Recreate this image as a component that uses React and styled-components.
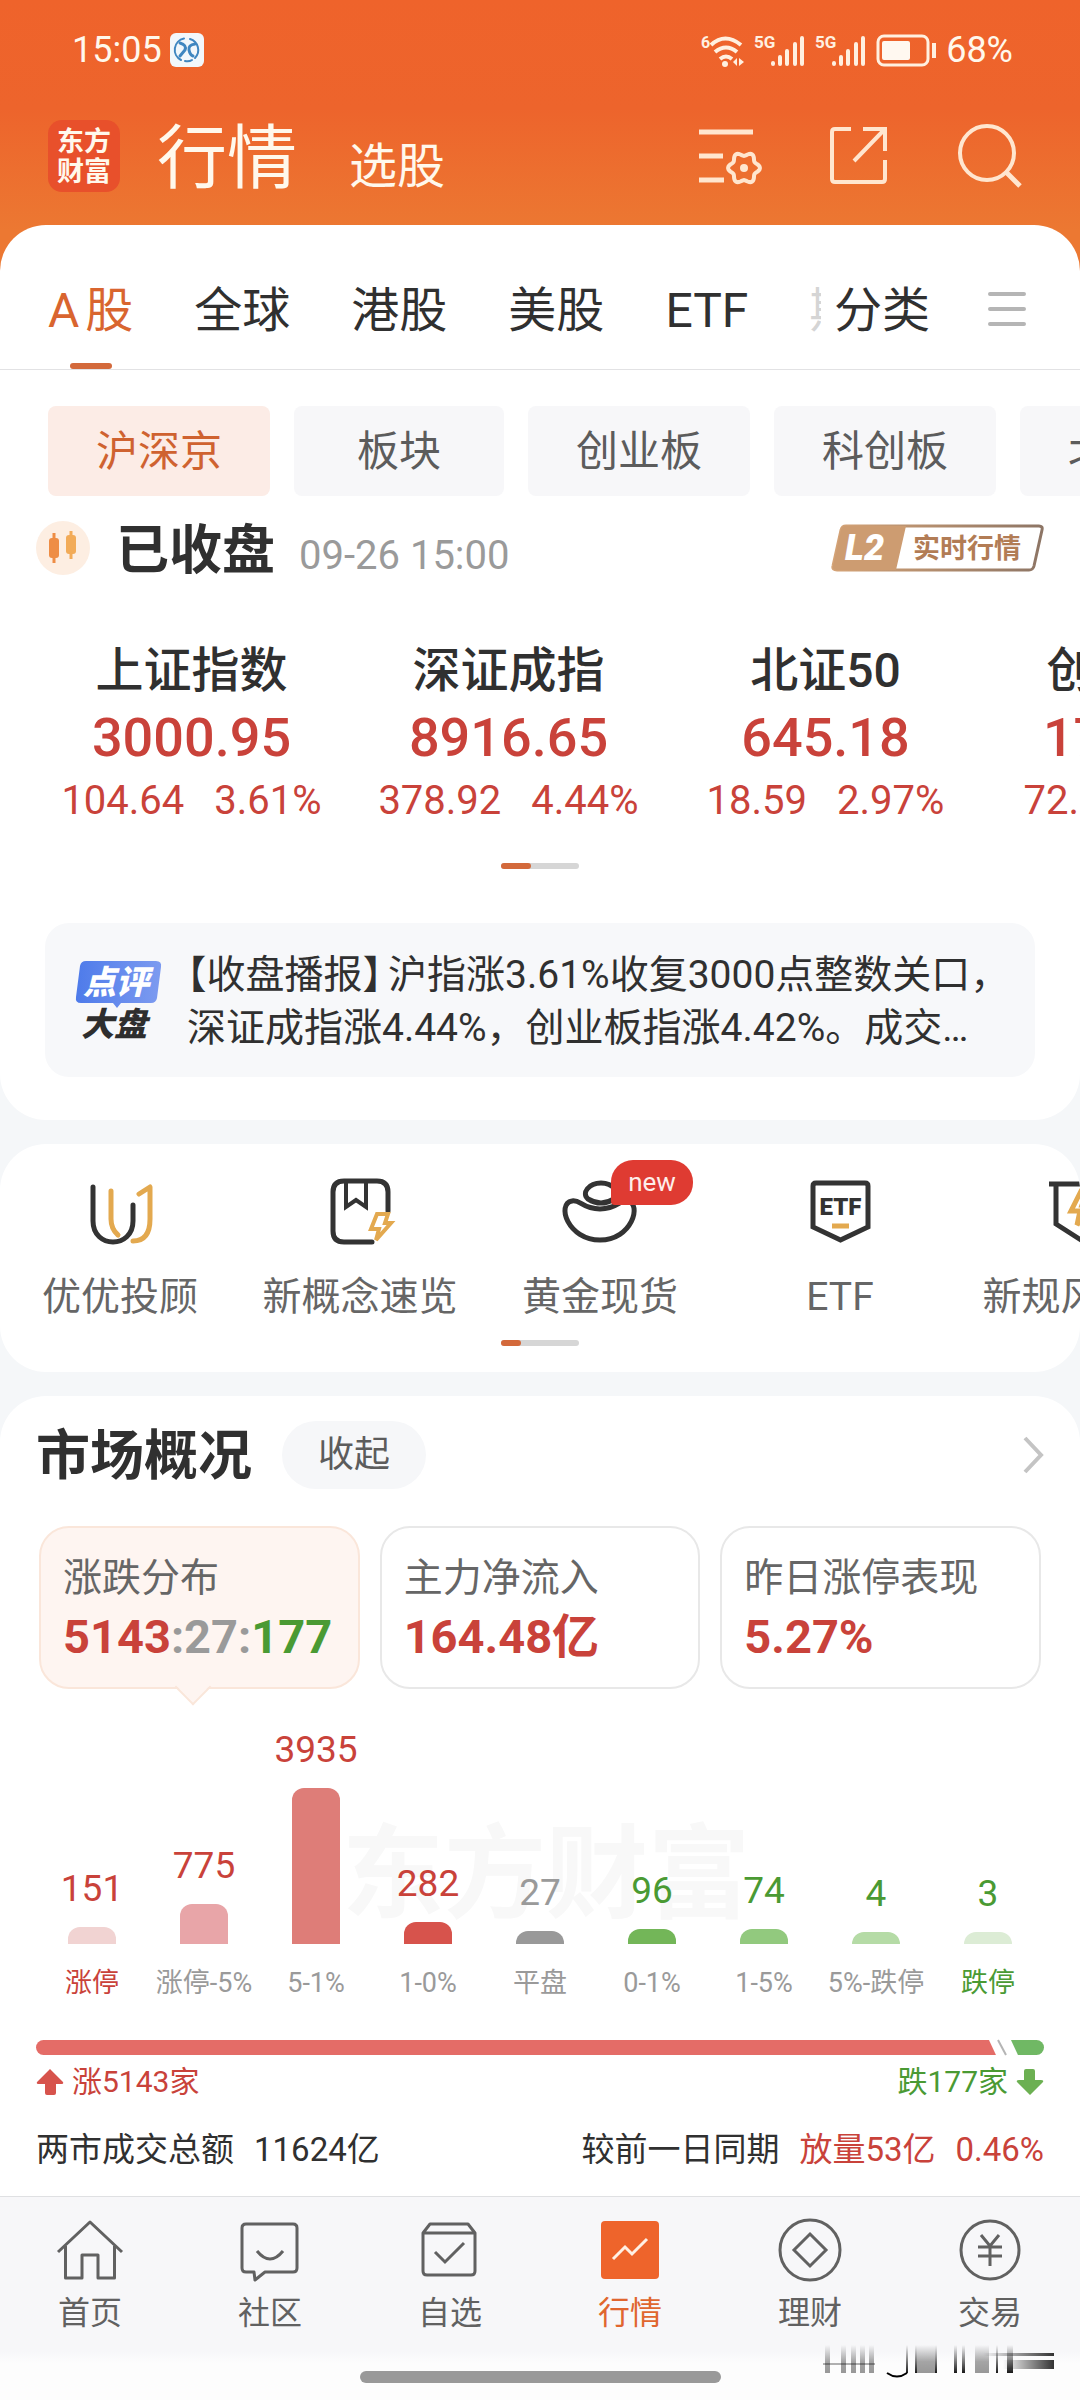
import React from "react";
import styled, { createGlobalStyle } from "styled-components";

const GlobalStyle = createGlobalStyle`
  * {
    box-sizing: border-box;
  }
  body {
    margin: 0;
    background: #f5f7f9;
    color: #303030;
    font-family: Roboto, "Noto Sans CJK SC", sans-serif;
  }
  button {
    border: 0;
    padding: 0;
    margin: 0;
    background: none;
    color: inherit;
    font: inherit;
    cursor: pointer;
  }
  h1, h2, p {
    margin: 0;
    padding: 0;
    font-weight: 400;
  }
  a {
    color: inherit;
    text-decoration: none;
  }
  svg {
    display: block;
    flex: none;
    overflow: visible;
  }
`;

const RED = "#c9423a";
const GREEN = "#4a9a33";
const GRAY = "#9a9a9a";
const ORANGE = "#ee642b";

const Page = styled.div`
  width: 100%;
  overflow: hidden;
`;

/* ---------- header ---------- */

const Header = styled.header`
  background: linear-gradient(#ef632b 0%, #ed642c 40%, #ec7832 85%);
  color: #fff8ec;
  padding-bottom: 59px;
`;

const StatusBar = styled.div`
  display: flex;
  align-items: center;
  height: 100px;
  padding: 0 67px 0 72px;
  font-size: 36px;
  line-height: 44px;
`;

const StatusApp = styled.svg`
  margin-left: 8px;
`;

const StatusRight = styled.div`
  display: flex;
  align-items: center;
  gap: 10px;
  margin-left: auto;
`;

const TitleBar = styled.div`
  display: flex;
  align-items: center;
  height: 112px;
  padding: 0 58px 0 48px;
`;

const Logo = styled.div`
  width: 72px;
  height: 72px;
  border-radius: 14px;
  background: #e8502b;
  font-family: "Noto Sans CJK SC", sans-serif;
  font-size: 27px;
  font-weight: 700;
  line-height: 30px;
  padding: 5px 0;
  text-align: center;
`;

const Titles = styled.div`
  display: flex;
  align-items: baseline;
  gap: 52px;
  padding-top: 6px;
  margin-left: 37px;
`;

const Title = styled.h1`
  font-size: 70px;
  line-height: 112px;
`;

const SubTitle = styled.a`
  font-size: 48px;
`;

const HeaderIcons = styled.div`
  display: flex;
  gap: 64px;
  margin-left: auto;
  color: #ffe6cf;
`;

/* ---------- panels ---------- */

const Panel = styled.section`
  position: relative;
  background: #fff;
  border-radius: 46px;
  margin-top: 24px;
  overflow: hidden;
`;

const QuotePanel = styled(Panel)`
  margin-top: -46px;
  padding-bottom: 43px;
`;

const MarketPanel = styled(Panel)`
  border-radius: 46px 46px 0 0;
  padding: 25px 36px 22px;
`;

const TabBar = styled.nav`
  display: flex;
  align-items: center;
  padding: 24px 54px 0 48px;
  border-bottom: 1px solid #e2e2e4;
  font-size: 48px;
`;

const TabScroller = styled.div`
  position: relative;
  display: flex;
  flex: 1;
  gap: 61px;
  overflow: hidden;

  &::after {
    content: "";
    position: absolute;
    right: 0;
    top: 0;
    width: 16px;
    height: 100%;
    background: rgba(255, 255, 255, 0.8);
  }
`;

const Tab = styled.button`
  position: relative;
  flex: none;
  height: 120px;
  line-height: 123px;
  white-space: nowrap;
  text-autospace: normal;
  color: ${(p) => (p.$active ? "#d9652f" : "#303030")};

  &::after {
    content: "";
    display: ${(p) => (p.$active ? "block" : "none")};
    position: absolute;
    left: 50%;
    bottom: 0;
    width: 42px;
    height: 6px;
    margin-left: -21px;
    border-radius: 3px;
    background: #d3693b;
  }
`;

const SortTab = styled(Tab)`
  margin: 0 58px 0 13px;
`;

const ChipRow = styled.div`
  display: flex;
  gap: 24px;
  padding: 36px 0 0 48px;
`;

const Chip = styled.button`
  flex: none;
  height: 90px;
  padding: 0 48px;
  min-width: 210px;
  border-radius: 8px;
  font-size: 42px;
  line-height: 92px;
  white-space: nowrap;
  background: ${(p) => (p.$active ? "#fcece6" : "#f7f7f9")};
  color: ${(p) => (p.$active ? "#cf6230" : "#5c5c5c")};
`;

const SessionRow = styled.div`
  display: flex;
  align-items: center;
  height: 104px;
  padding: 0 36px;
`;

const SessionText = styled.div`
  display: flex;
  align-items: baseline;
  gap: 24px;
  padding-top: 6px;
  margin-left: 26px;
`;

const SessionTitle = styled.h2`
  font-size: 53px;
  font-weight: 700;
  line-height: 72px;
`;

const SessionTime = styled.span`
  font-size: 40px;
  color: ${GRAY};
`;

const LevelButton = styled.button`
  margin-left: auto;
`;

const IndexRow = styled.div`
  display: flex;
  padding: 40px 0 0 33px;
`;

const IndexItem = styled.button`
  flex: 0 0 317px;
  display: flex;
  flex-direction: column;
  align-items: center;
  color: ${RED};
`;

const IndexName = styled.span`
  font-size: 48px;
  font-weight: 500;
  line-height: 62px;
  color: #303030;
`;

const IndexValue = styled.span`
  font-size: 54px;
  font-weight: 500;
  line-height: 72px;
`;

const IndexChange = styled.span`
  display: flex;
  gap: 30px;
  font-size: 40px;
  line-height: 54px;
`;

const Pager = styled.div`
  width: 78px;
  height: 6px;
  margin: ${(p) => p.$top}px auto 0;
  border-radius: 3px;
  background: #d6d6d6;

  &::before {
    content: "";
    display: block;
    width: ${(p) => p.$fill}px;
    height: 6px;
    border-radius: 3px;
    background: #d3693b;
  }
`;

const Review = styled.a`
  display: flex;
  align-items: center;
  gap: 26px;
  margin: 54px 45px 0;
  padding: 24px 20px 24px 31px;
  border-radius: 24px;
  background: #f7f8fa;
`;

const ReviewText = styled.p`
  flex: 1;
  min-width: 0;
  padding-top: 2px;
  margin-bottom: -2px;
  font-size: 39px;
  line-height: 53px;
  white-space: nowrap;
`;

const ReviewLine = styled.span`
  display: block;
`;

const ReviewRest = styled(ReviewLine)`
  overflow: hidden;
  text-overflow: ellipsis;
  margin-right: 30px;
`;

const Bracket = styled.span`
  font-family: "Noto Sans CJK SC", sans-serif;
  font-feature-settings: "halt";
  text-spacing-trim: space-all;
  line-height: 0;
  margin-right: ${(p) => (p.$closing ? 6 : 0)}px;
`;

const Shortcuts = styled.div`
  display: flex;
  padding-top: 35px;
`;

const Shortcut = styled.a`
  position: relative;
  flex: 0 0 240px;
  display: flex;
  flex-direction: column;
  align-items: center;
  gap: 24px;
  font-size: 39px;
  line-height: 56px;
  white-space: nowrap;
  color: #666;
`;

const NewBadge = styled.span`
  position: absolute;
  left: 131px;
  top: -19px;
  width: 82px;
  height: 45px;
  border-radius: 22px 22px 22px 4px;
  background: #df3b32;
  color: #fdeeea;
  font-size: 26px;
  line-height: 45px;
  text-align: center;
`;

const ShortcutPanel = styled(Panel)`
  padding-bottom: 26px;
`;

/* ---------- market overview ---------- */

const MarketHead = styled.div`
  display: flex;
  align-items: center;
  height: 68px;
`;

const MarketTitle = styled.h2`
  padding-top: 4px;
  font-size: 54px;
  font-weight: 700;
  line-height: 68px;
`;

const FoldButton = styled.button`
  width: 144px;
  height: 68px;
  margin-left: 30px;
  border-radius: 34px;
  background: #f6f7f9;
  color: #5c5c5c;
  font-size: 36px;
  line-height: 68px;
`;

const MoreLink = styled.a`
  margin-left: auto;
`;

const StatGrid = styled.div`
  display: grid;
  grid-template-columns: repeat(3, 1fr);
  gap: 20px;
  padding: 37px 3px 0;
`;

const Stat = styled.button`
  position: relative;
  padding: 24px 22px 17px;
  border: 2px solid ${(p) => (p.$active ? "#fae6da" : "#e8e8e8")};
  border-radius: 30px;
  background: ${(p) => (p.$active ? "#fef5f1" : "#fff")};
  text-align: left;
  white-space: nowrap;

  &::after {
    content: "";
    display: ${(p) => (p.$active ? "block" : "none")};
    position: absolute;
    left: 139px;
    bottom: -13px;
    width: 24px;
    height: 24px;
    border: solid #fae6da;
    border-width: 0 2px 2px 0;
    background: linear-gradient(135deg, transparent 50%, #fef5f1 50%);
    transform: rotate(45deg);
  }
`;

const StatLabel = styled.span`
  display: block;
  font-size: 39px;
  line-height: 52px;
  color: #666;
`;

const StatValue = styled.span`
  display: block;
  font-size: 47px;
  font-weight: 700;
  line-height: 66px;
  color: ${RED};
`;

const Tone = styled.span`
  color: ${(p) => p.$color};
`;

const Chart = styled.div`
  position: relative;
  display: grid;
  grid-template-columns: repeat(9, 1fr);
  align-items: end;
  margin-top: 39px;
`;

const Watermark = styled.span`
  position: absolute;
  left: 306px;
  bottom: 62px;
  font-size: 102px;
  font-weight: 700;
  line-height: 130px;
  color: #f8f8f8;
`;

const BarColumn = styled.div`
  position: relative;
  display: flex;
  flex-direction: column;
  align-items: center;
  min-width: 0;
`;

const BarValue = styled.span`
  margin-bottom: 16px;
  font-size: 37px;
  line-height: 44px;
  color: ${(p) => p.$color};
`;

const Bar = styled.span`
  width: 48px;
  border-radius: 12px 12px 0 0;
  background: ${(p) => p.$fill};
`;

const BarLabel = styled.span`
  margin-top: 20px;
  font-size: 27px;
  line-height: 38px;
  white-space: nowrap;
  color: ${(p) => p.$color};
`;

const Balance = styled.div`
  display: flex;
  height: 15px;
  margin-top: 38px;
`;

const BalanceUp = styled.span`
  border-radius: 8px 0 0 8px;
  background: #e46c67;
  clip-path: polygon(0 0, calc(100% - 7px) 0, 100% 100%, 0 100%);
`;

const BalanceDown = styled.span`
  border-radius: 0 8px 8px 0;
  background: #70b864;
  clip-path: polygon(0 0, 100% 0, 100% 100%, 7px 100%);
`;

const SpreadRow = styled.div`
  display: flex;
  align-items: center;
  justify-content: space-between;
`;

const CountRow = styled(SpreadRow)`
  margin-top: 5px;
  font-size: 30px;
  line-height: 44px;
`;

const Count = styled.span`
  display: flex;
  align-items: center;
  gap: 8px;
  color: ${(p) => p.$color};
`;

const TurnoverRow = styled(SpreadRow)`
  margin-top: 22px;
  font-size: 33px;
  line-height: 48px;
`;

const Facts = styled.span`
  display: flex;
  gap: 20px;
`;

/* ---------- bottom ---------- */

const BottomNav = styled.nav`
  display: grid;
  grid-template-columns: repeat(6, 1fr);
  padding: 21px 0 16px;
  border-top: 1px solid #dfe0e2;
  background: #f7f7f9;
`;

const NavItem = styled.a`
  display: flex;
  flex-direction: column;
  align-items: center;
  gap: 7px;
  font-size: 32px;
  line-height: 44px;
  color: ${(p) => (p.$active ? "#e0662f" : "#616161")};
`;

const HomeArea = styled.div`
  position: relative;
  height: 50px;
  padding-top: 20px;
  background: linear-gradient(#f7f7f9, #fdfdfd 12px);
`;

const HomePill = styled.div`
  width: 361px;
  height: 12px;
  margin: 0 auto;
  border-radius: 6px;
  background: #999;
`;

const Smudge = styled.svg`
  position: absolute;
  right: 25px;
  top: -6px;
`;

/* ---------- icons ---------- */

const Icon = ({ children, width = 66, stroke = 3 }) => (
  <svg
    width={width}
    height="66"
    viewBox={`0 0 ${width} 66`}
    fill="none"
    stroke="currentColor"
    strokeWidth={stroke}
    aria-hidden="true"
  >
    {children}
  </svg>
);

// six lobed outline around (48, 45)
const gearPath =
  Array.from({ length: 72 }, (_, i) => {
    const a = (i * Math.PI) / 36;
    const r = 14 + 1.9 * Math.cos(6 * a);
    return `${i ? "L" : "M"}${(48 + r * Math.cos(a)).toFixed(2)} ${(45 + r * Math.sin(a)).toFixed(2)}`;
  }).join("") + "Z";

const Signal = () => (
  <svg width="51" height="35" viewBox="0 0 51 35" aria-hidden="true">
    <text x="0" y="15" fontSize="17" fontWeight="700" fill="#fff0e0">5G</text>
    <g stroke="#fff0e0" strokeWidth="4" strokeLinecap="round">
      <path d="M19 30v1M26 24v7M33 18v13M41 11v20M48 5v26" />
    </g>
  </svg>
);

const navIcons = {
  home: (
    <Icon>
      <path d="M1 34 33 4l32 30M8.500 28v32H25V37h16v23h16.500V28" strokeLinejoin="round" />
    </Icon>
  ),
  community: (
    <Icon>
      <path d="M9 6h47q4 0 4 4v40q0 4-4 4H28l-10 8-1-8H9q-4 0-4-4V10q0-4 4-4Z" strokeLinejoin="round" />
      <path d="M20 33q13 16 26 0" />
    </Icon>
  ),
  picks: (
    <Icon>
      <path d="M6 15 13 6h38l7 9v38q0 4-4 4H10q-4 0-4-4ZM6 15h52" strokeLinejoin="round" />
      <path d="m18 34 10 10 19-19" />
    </Icon>
  ),
  quotes: (
    <Icon>
      <rect x="4" y="3" width="58" height="58" rx="4" fill={ORANGE} stroke="none" />
      <path d="m16 41 12-12 7 7 15-15" stroke="#fff0e4" />
    </Icon>
  ),
  wealth: (
    <Icon>
      <circle cx="33" cy="32" r="30" />
      <path d="m33 16 16 16-16 16-16-16Z" />
    </Icon>
  ),
  trade: (
    <Icon>
      <circle cx="33" cy="32" r="29" />
      <path d="m24 17 9 11 9-11M33 28v20M21 29h24M21 38h24" />
    </Icon>
  ),
};

const YELLOW = "#e3a94f";

const shortcutIcons = {
  advisor: (
    <Icon stroke={5}>
      <g strokeLinecap="round" strokeLinejoin="round">
        <path d="M6 8v34c0 28 40 28 40 0V26" stroke="#333" />
        <path d="M24 12v28q0 10 7 16M52 15l11-7v32q0 22-17 22" stroke={YELLOW} />
      </g>
    </Icon>
  ),
  concept: (
    <Icon stroke={5}>
      <path d="M61 32V13q0-11-11-11H17Q6 2 6 13v39q0 11 11 11h28" stroke="#333" strokeLinecap="round" />
      <path d="M19 2v26l10-7 10 7V2" stroke="#333" strokeWidth="4" />
      <path d="M50 35h11l-3 9h6L49 61l3-11h-8Z" stroke={YELLOW} strokeWidth="4" />
    </Icon>
  ),
  gold: (
    <Icon stroke={5}>
      <path d="M21 20C14 14 22 4 34 4s20 10 13 16q-13 8-26 0Z" stroke="#333" />
      <path d="M5 22c-16 3-4 39 28 39s42-36 28-39c-8-2-10 8-28 8S13 20 5 22Z" stroke="#333" />
    </Icon>
  ),
  etf: (
    <Icon stroke={5}>
      <path d="M6 7q0-3 3-3h49q3 0 3 3v41L33.500 61 6 48Z" stroke="#333" />
      <text x="33.500" y="36" textAnchor="middle" fontSize="24" fontWeight="900" fill="#333" stroke="none">ETF</text>
      <path d="M25 47h17" stroke={YELLOW} />
    </Icon>
  ),
  risk: (
    <Icon stroke={5}>
      <path d="M2 5h62M9 5v40l25 16 24-16V5" stroke="#333" />
      <path d="M34 12 24 32h9l-3 14 14-20h-9l5-14Z" stroke={YELLOW} />
    </Icon>
  ),
};

/* ---------- data ---------- */

const tabs = ["A股", "全球", "港股", "美股", "ETF", "期货"];
const chips = ["沪深京", "板块", "创业板", "科创板", "北交所"];

const indices = [
  { name: "上证指数", value: "3000.95", diff: "104.64", pct: "3.61%" },
  { name: "深证成指", value: "8916.65", diff: "378.92", pct: "4.44%" },
  { name: "北证50", value: "645.18", diff: "18.59", pct: "2.97%" },
  { name: "创业板指", value: "1714.14", diff: "72.56", pct: "4.42%" },
];

const shortcuts = [
  { icon: "advisor", label: "优优投顾" },
  { icon: "concept", label: "新概念速览" },
  { icon: "gold", label: "黄金现货", isNew: true },
  { icon: "etf", label: "ETF" },
  { icon: "risk", label: "新规风险榜" },
];

const bars = [
  { label: "涨停", value: 151, height: 17, fill: "#f1d3d2", color: RED, labelColor: RED },
  { label: "涨停-5%", value: 775, height: 40, fill: "#e8a5a8", color: RED },
  { label: "5-1%", value: 3935, height: 156, fill: "#de7d78", color: RED },
  { label: "1-0%", value: 282, height: 22, fill: "#d7534c", color: RED },
  { label: "平盘", value: 27, height: 13, fill: "#999", color: GRAY },
  { label: "0-1%", value: 96, height: 15, fill: "#73b658", color: GREEN },
  { label: "1-5%", value: 74, height: 15, fill: "#92c97e", color: GREEN },
  { label: "5%-跌停", value: 4, height: 12, fill: "#b5dba6", color: GREEN },
  { label: "跌停", value: 3, height: 12, fill: "#dcecd5", color: GREEN, labelColor: GREEN },
];

const navItems = [
  { icon: "home", label: "首页" },
  { icon: "community", label: "社区" },
  { icon: "picks", label: "自选" },
  { icon: "quotes", label: "行情" },
  { icon: "wealth", label: "理财" },
  { icon: "trade", label: "交易" },
];

const up = 5143;
const down = 177;

/* ---------- sections ---------- */

function TopHeader() {
  return (
    <Header>
      <StatusBar>
        <span>15:05</span>
        <StatusApp width="34" height="34" viewBox="0 0 34 34" aria-hidden="true">
          <rect width="34" height="34" rx="6" fill="#f2f7fb" />
          <g fill="none" stroke="#3f86c0" strokeWidth="3" strokeLinecap="round">
            <path d="M11 27a11.500 11.500 0 0 1 3-21.500M20 6a11.500 11.500 0 0 1 5 19M15 28q4 1 7-1" strokeWidth="2" />
            <path d="M10 10q7 2 5 7l-5 6M25 11q-7 1-6 6t4 6" />
          </g>
        </StatusApp>
        <StatusRight>
          <svg width="43" height="35" viewBox="0 0 43 35" aria-hidden="true">
            <text x="0" y="15" fontSize="16" fontWeight="700" fill="#fff0e0">6</text>
            <g fill="none" stroke="#fff0e0" strokeWidth="4">
              <path d="M10 12q14-13 30 0M14 19q11-9 22 0M19 26q6-5 12 0" />
            </g>
            <circle cx="24" cy="31" r="3" fill="#fff0e0" />
            <path d="M36 25v8l-4-4ZM38 25v8l5-4Z" fill="#fff0e0" />
          </svg>
          <Signal />
          <Signal />
          <svg width="60" height="33" viewBox="0 0 60 33" aria-hidden="true">
            <rect x="2" y="2" width="50" height="29" rx="6" fill="none" stroke="#fff0e0" strokeWidth="3" />
            <rect x="6" y="7" width="28" height="19" rx="2" fill="#fff8f0" />
            <path d="M58 9v15" stroke="#fff0e0" strokeWidth="4" />
          </svg>
          <span>68%</span>
        </StatusRight>
      </StatusBar>
      <TitleBar>
        <Logo>
          东方
          <br />
          财富
        </Logo>
        <Titles>
          <Title>行情</Title>
          <SubTitle href="#pick">选股</SubTitle>
        </Titles>
        <HeaderIcons>
          <button aria-label="设置">
            <Icon stroke={5}>
              <path d="M3 9h54M3 33h24M3 57h25" />
              <path d={gearPath} strokeWidth="4" />
              <circle cx="48" cy="45" r="4" fill="currentColor" stroke="none" />
            </Icon>
          </button>
          <button aria-label="分享">
            <Icon stroke={4}>
              <path d="M25 6H9q-3 0-3 3v47q0 3 3 3h47q3 0 3-3V37M37 6h22v22M58 7 28 38" />
            </Icon>
          </button>
          <button aria-label="搜索">
            <Icon stroke={4}>
              <circle cx="31" cy="30" r="27" />
              <path d="m50 49 14 14" strokeWidth="5" />
            </Icon>
          </button>
        </HeaderIcons>
      </TitleBar>
    </Header>
  );
}

function Quotes() {
  return (
    <QuotePanel>
      <TabBar>
        <TabScroller>
          {tabs.map((name, i) => (
            <Tab key={name} $active={i === 0}>{name}</Tab>
          ))}
        </TabScroller>
        <SortTab>分类</SortTab>
        <button aria-label="菜单">
          <svg width="38" height="34" viewBox="0 0 38 34" aria-hidden="true">
            <path d="M2 2h34M2 17h34M2 32h34" stroke="#b5b5b5" strokeWidth="4" strokeLinecap="round" />
          </svg>
        </button>
      </TabBar>

      <ChipRow>
        {chips.map((name, i) => (
          <Chip key={name} $active={i === 0}>{name}</Chip>
        ))}
      </ChipRow>

      <SessionRow>
        <svg width="54" height="54" viewBox="0 0 54 54" aria-hidden="true">
          <circle cx="27" cy="27" r="27" fill="#fdeee2" />
          <path d="M18 12v30" stroke="#ee8d45" strokeWidth="3" />
          <rect x="13" y="17" width="10" height="20" rx="3" fill="#ee8d45" />
          <path d="M35 10v28" stroke="#f2ab58" strokeWidth="3" />
          <rect x="30" y="14" width="10" height="19" rx="3" fill="#f2ab58" />
        </svg>
        <SessionText>
          <SessionTitle>已收盘</SessionTitle>
          <SessionTime>09-26 15:00</SessionTime>
        </SessionText>
        <LevelButton aria-label="L2 实时行情">
          <svg width="213" height="48" viewBox="0 0 213 48" aria-hidden="true">
            <defs>
              <linearGradient id="level" x1="0" x2="1">
                <stop offset="0" stopColor="#d5a376" />
                <stop offset="1" stopColor="#8d7565" />
              </linearGradient>
            </defs>
            <path d="M15 2h193q4 0 3 4l-8 36q-1 4-5 4H6q-5 0-4-4l8-36q1-4 5-4Z" fill="#fff" stroke="url(#level)" strokeWidth="3" />
            <path d="M15 2h60L65 46H6q-5 0-4-4l8-36q1-4 5-4Z" fill="#cd9c71" />
            <text x="14" y="36" fontSize="36" fontWeight="900" fontStyle="italic" fill="#fff">L2</text>
            <text x="82" y="34" fontSize="27" fontWeight="700" fill="#b27c55">实时行情</text>
          </svg>
        </LevelButton>
      </SessionRow>

      <IndexRow>
        {indices.map((item) => (
          <IndexItem key={item.name}>
            <IndexName>{item.name}</IndexName>
            <IndexValue>{item.value}</IndexValue>
            <IndexChange>
              <span>{item.diff}</span>
              <span>{item.pct}</span>
            </IndexChange>
          </IndexItem>
        ))}
      </IndexRow>
      <Pager $top={35} $fill={30} />

      <Review href="#review">
        <svg width="85" height="80" viewBox="0 0 85 80" aria-label="点评大盘">
          <defs>
            <linearGradient id="bubble" x1="0" x2="1">
              <stop offset="0" stopColor="#4e7bea" />
              <stop offset="1" stopColor="#7d9bf0" />
            </linearGradient>
          </defs>
          <path d="M10 1h70q6 0 5 6l-4 31q-1 5-6 5H45l-4 5-4-5H5q-6 0-5-6L4 6q1-5 6-5Z" fill="url(#bubble)" />
          <text x="7" y="34" fontSize="33" fontWeight="900" fontStyle="italic" fill="#fff">点评</text>
          <text x="5" y="76" fontSize="33" fontWeight="900" fontStyle="italic" fill="#2e2e2e">大盘</text>
        </svg>
        <ReviewText>
          <ReviewLine>
            <Bracket>【</Bracket>收盘播报<Bracket $closing>】</Bracket>沪指涨3.61%收复3000点整数关口，
          </ReviewLine>
          <ReviewRest>深证成指涨4.44%，创业板指涨4.42%。成交额超万亿元</ReviewRest>
        </ReviewText>
      </Review>
    </QuotePanel>
  );
}

function MarketOverview() {
  return (
    <MarketPanel>
      <MarketHead>
        <MarketTitle>市场概况</MarketTitle>
        <FoldButton>收起</FoldButton>
        <MoreLink href="#market" aria-label="更多">
          <svg width="22" height="38" viewBox="0 0 22 38" aria-hidden="true">
            <path d="m3 2 16 17L3 36" fill="none" stroke="#c4c4c4" strokeWidth="4" />
          </svg>
        </MoreLink>
      </MarketHead>

      <StatGrid>
        <Stat $active>
          <StatLabel>涨跌分布</StatLabel>
          <StatValue>
            {up}
            <Tone $color={GRAY}>:27:</Tone>
            <Tone $color={GREEN}>{down}</Tone>
          </StatValue>
        </Stat>
        <Stat>
          <StatLabel>主力净流入</StatLabel>
          <StatValue>164.48亿</StatValue>
        </Stat>
        <Stat>
          <StatLabel>昨日涨停表现</StatLabel>
          <StatValue>5.27%</StatValue>
        </Stat>
      </StatGrid>

      <Chart>
        <Watermark aria-hidden="true">东方财富</Watermark>
        {bars.map((bar) => (
          <BarColumn key={bar.label}>
            <BarValue $color={bar.color}>{bar.value}</BarValue>
            <Bar $fill={bar.fill} style={{ height: bar.height }} />
            <BarLabel $color={bar.labelColor || GRAY}>{bar.label}</BarLabel>
          </BarColumn>
        ))}
      </Chart>

      <Balance>
        <BalanceUp style={{ flexGrow: up }} />
        <svg width="15" height="15" viewBox="0 0 15 15" aria-hidden="true">
          <path d="m2 0 8 15" stroke="#b5b5b5" strokeWidth="2" />
        </svg>
        <BalanceDown style={{ flexGrow: down }} />
      </Balance>
      <CountRow>
        <Count $color={RED}>
          <svg width="28" height="26" viewBox="0 0 28 26" aria-hidden="true">
            <path d="M14 0 27 13q1 2-2 2h-5v9q0 2-2 2h-7q-2 0-2-2v-9H3q-3 0-2-2Z" fill="#d7534c" />
          </svg>
          涨{up}家
        </Count>
        <Count $color={GREEN}>
          跌{down}家
          <svg width="28" height="26" viewBox="0 0 28 26" aria-hidden="true">
            <path d="M14 26 1 13q-1-2 2-2h5V2q0-2 2-2h7q2 0 2 2v9h6q3 0 2 2Z" fill="#6cb052" />
          </svg>
        </Count>
      </CountRow>
      <TurnoverRow>
        <Facts>
          <span>两市成交总额</span>
          <span>11624亿</span>
        </Facts>
        <Facts>
          <span>较前一日同期</span>
          <Tone $color={RED}>放量53亿</Tone>
          <Tone $color={RED}>0.46%</Tone>
        </Facts>
      </TurnoverRow>
    </MarketPanel>
  );
}

function Footer() {
  return (
    <footer>
      <BottomNav>
        {navItems.map((item) => (
          <NavItem key={item.icon} href={`#${item.icon}`} $active={item.icon === "quotes"}>
            {navIcons[item.icon]}
            <span>{item.label}</span>
          </NavItem>
        ))}
      </BottomNav>
      <HomeArea>
        <HomePill />
        <Smudge width="232" height="34" viewBox="0 0 232 34" aria-hidden="true">
          <defs>
            <linearGradient id="fadeDown" x1="0" y1="0" x2="0" y2="1">
              <stop offset="0" stopColor="#000" stopOpacity="0" />
              <stop offset="1" stopColor="#000" stopOpacity="0.9" />
            </linearGradient>
            <linearGradient id="fadeSoft" x1="0" y1="0" x2="0" y2="1">
              <stop offset="0" stopColor="#000" stopOpacity="0" />
              <stop offset="0.6" stopColor="#000" stopOpacity="0.35" />
              <stop offset="1" stopColor="#000" stopOpacity="0.4" />
            </linearGradient>
            <linearGradient id="fadeRight" x1="0" x2="1">
              <stop offset="0" stopColor="#000" stopOpacity="0" />
              <stop offset="1" stopColor="#000" stopOpacity="0.8" />
            </linearGradient>
          </defs>
          <g fill="url(#fadeSoft)">
            <rect x="2" y="0" width="5" height="28" />
            <rect x="18" y="0" width="5" height="28" />
            <rect x="28" y="0" width="5" height="28" />
            <rect x="37" y="0" width="5" height="28" />
            <rect x="46" y="0" width="5" height="28" />
            <rect x="94" y="0" width="18" height="28" />
            <rect x="152" y="0" width="14" height="28" />
          </g>
          <g fill="url(#fadeDown)">
            <rect x="83" y="0" width="2" height="28" />
            <rect x="92" y="0" width="2" height="28" />
            <rect x="112" y="0" width="2" height="28" />
            <rect x="131" y="0" width="3" height="28" />
            <rect x="139" y="0" width="3" height="28" />
            <rect x="173" y="0" width="2" height="28" />
            <rect x="184" y="0" width="6" height="28" />
          </g>
          <g fill="url(#fadeRight)">
            <rect x="160" y="8" width="71" height="3" />
            <rect x="180" y="15" width="51" height="9" />
          </g>
          <path d="M0 19h52" stroke="#000" strokeOpacity="0.3" strokeWidth="2" />
          <path d="M64 28q10 7 20 0" fill="none" stroke="#000" strokeWidth="2" />
        </Smudge>
      </HomeArea>
    </footer>
  );
}

function App() {
  return (
    <Page>
      <GlobalStyle />
      <TopHeader />
      <main>
        <Quotes />
        <ShortcutPanel>
          <Shortcuts>
            {shortcuts.map((item) => (
              <Shortcut key={item.icon} href={`#${item.icon}`}>
                {shortcutIcons[item.icon]}
                <span>{item.label}</span>
                {item.isNew && <NewBadge>new</NewBadge>}
              </Shortcut>
            ))}
          </Shortcuts>
          <Pager $top={15} $fill={20} />
        </ShortcutPanel>
        <MarketOverview />
      </main>
      <Footer />
    </Page>
  );
}

export default App;
